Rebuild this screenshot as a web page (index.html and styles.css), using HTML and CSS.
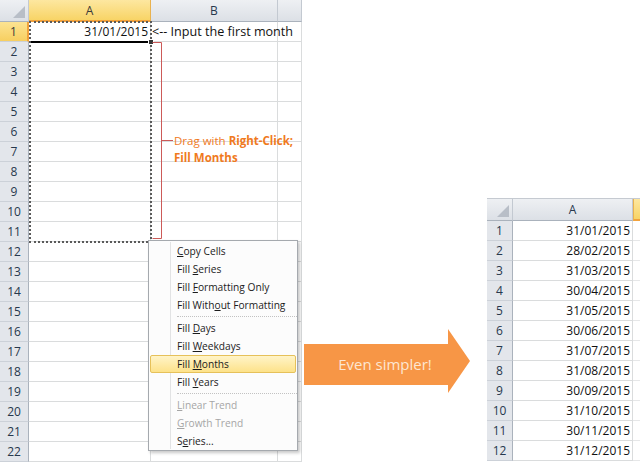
FILE: index.html
```html
<!DOCTYPE html>
<html>
<head>
<meta charset="utf-8">
<link rel="stylesheet" href="styles.css">
</head>
<body>
<div class="canvas">
  <div class="sheet">
    <div class="grid">
      <div class="hd corner"></div><div class="hd sel">A</div><div class="hd">B</div><div class="hd"></div>
      <div class="rh sel">1</div><div class="c num">31/01/2015</div><div class="c over">&lt;-- Input the first month</div><div class="c"></div>
      <div class="rh">2</div><div class="c"></div><div class="c"></div><div class="c"></div>
      <div class="rh">3</div><div class="c"></div><div class="c"></div><div class="c"></div>
      <div class="rh">4</div><div class="c"></div><div class="c"></div><div class="c"></div>
      <div class="rh">5</div><div class="c"></div><div class="c"></div><div class="c"></div>
      <div class="rh">6</div><div class="c"></div><div class="c"></div><div class="c"></div>
      <div class="rh">7</div><div class="c"></div><div class="c"></div><div class="c"></div>
      <div class="rh">8</div><div class="c"></div><div class="c"></div><div class="c"></div>
      <div class="rh">9</div><div class="c"></div><div class="c"></div><div class="c"></div>
      <div class="rh">10</div><div class="c"></div><div class="c"></div><div class="c"></div>
      <div class="rh">11</div><div class="c"></div><div class="c"></div><div class="c"></div>
      <div class="rh">12</div><div class="c"></div><div class="c"></div><div class="c"></div>
      <div class="rh">13</div><div class="c"></div><div class="c"></div><div class="c"></div>
      <div class="rh">14</div><div class="c"></div><div class="c"></div><div class="c"></div>
      <div class="rh">15</div><div class="c"></div><div class="c"></div><div class="c"></div>
      <div class="rh">16</div><div class="c"></div><div class="c"></div><div class="c"></div>
      <div class="rh">17</div><div class="c"></div><div class="c"></div><div class="c"></div>
      <div class="rh">18</div><div class="c"></div><div class="c"></div><div class="c"></div>
      <div class="rh">19</div><div class="c"></div><div class="c"></div><div class="c"></div>
      <div class="rh">20</div><div class="c"></div><div class="c"></div><div class="c"></div>
      <div class="rh">21</div><div class="c"></div><div class="c"></div><div class="c"></div>
      <div class="rh">22</div><div class="c"></div><div class="c"></div><div class="c"></div>
    </div>
    <div class="ants"></div>
    <div class="active-bottom"></div>
    <div class="handle"></div>
    <svg class="bracket" width="302" height="462" viewBox="0 0 302 462">
      <polyline points="152.5,42.5 161.5,42.5 161.5,238.5 152.5,238.5" fill="none" stroke="#cc5a58" stroke-width="1"/>
      <line x1="161.5" y1="140.5" x2="173" y2="140.5" stroke="#cc5a58" stroke-width="1"/>
    </svg>
    <div class="note">Drag with <b>Right-Click;</b><br><b>Fill Months</b></div>
    <div class="menu">
      <div class="mi"><u>C</u>opy Cells</div>
      <div class="mi">Fill <u>S</u>eries</div>
      <div class="mi">Fill <u>F</u>ormatting Only</div>
      <div class="mi">Fill With<u>o</u>ut Formatting</div>
      <div class="sep"></div>
      <div class="mi">Fill <u>D</u>ays</div>
      <div class="mi">Fill <u>W</u>eekdays</div>
      <div class="mi hot">Fill <u>M</u>onths</div>
      <div class="mi">Fill <u>Y</u>ears</div>
      <div class="sep"></div>
      <div class="mi dis"><u>L</u>inear Trend</div>
      <div class="mi dis"><u>G</u>rowth Trend</div>
      <div class="mi">S<u>e</u>ries...</div>
    </div>
  </div>

  <div class="arrow">Even simpler!</div>

  <div class="table2">
    <div class="hd corner"></div><div class="hd">A</div><div class="hd sel2"></div>
    <div class="rh">1</div><div class="c num">31/01/2015</div><div class="c edge"></div>
    <div class="rh">2</div><div class="c num">28/02/2015</div><div class="c edge"></div>
    <div class="rh">3</div><div class="c num">31/03/2015</div><div class="c edge"></div>
    <div class="rh">4</div><div class="c num">30/04/2015</div><div class="c edge"></div>
    <div class="rh">5</div><div class="c num">31/05/2015</div><div class="c edge"></div>
    <div class="rh">6</div><div class="c num">30/06/2015</div><div class="c edge"></div>
    <div class="rh">7</div><div class="c num">31/07/2015</div><div class="c edge"></div>
    <div class="rh">8</div><div class="c num">31/08/2015</div><div class="c edge"></div>
    <div class="rh">9</div><div class="c num">30/09/2015</div><div class="c edge"></div>
    <div class="rh">10</div><div class="c num">31/10/2015</div><div class="c edge"></div>
    <div class="rh">11</div><div class="c num">30/11/2015</div><div class="c edge"></div>
    <div class="rh">12</div><div class="c num">31/12/2015</div><div class="c edge"></div>
  </div>
</div>
</body>
</html>
```
FILE: styles.css
```css
html, body {
  margin: 0;
  padding: 0;
  background: #fff;
}
body {
  width: 640px;
  height: 462px;
  overflow: hidden;
  font-family: "Open Sans", "Liberation Sans", sans-serif;
}
.canvas {
  display: flex;
  align-items: flex-start;
  width: 640px;
  height: 462px;
}

/* left sheet */
.sheet {
  position: relative;
  flex: none;
  width: 302px;
  height: 462px;
  overflow: hidden;
}
.grid {
  display: grid;
  grid-template-columns: 29px 122px 127px 24px;
  grid-template-rows: 22px;
  grid-auto-rows: 20px;
}
.hd {
  box-sizing: border-box;
  background: linear-gradient(#eef0f3, #dce0e6);
  border-right: 1px solid #c3c9d1;
  border-bottom: 1px solid #aab2bc;
  font-size: 12px;
  line-height: 21px;
  color: #27384d;
  text-align: center;
}
.hd.sel {
  background: linear-gradient(#fde7a0, #f8d466);
  border-bottom: 2px solid #f2a23c;
  border-right-color: #e9b24f;
  color: #3a3a3a;
}
.hd.sel2 {
  background: linear-gradient(#fde7a0, #f8d466);
  border-right: none;
  border-bottom: 2px solid #f2a23c;
  border-left: 1px solid #e9b24f;
}
.corner {
  position: relative;
}
.corner::after {
  content: "";
  position: absolute;
  right: 3px;
  bottom: 3px;
  width: 12px;
  height: 12px;
  background: #b8bec7;
  clip-path: polygon(100% 0, 100% 100%, 0 100%);
}
.rh {
  box-sizing: border-box;
  background: #e3e6eb;
  border-right: 1px solid #aab2bc;
  border-bottom: 1px solid #ccd1d8;
  font-size: 12px;
  line-height: 19px;
  color: #27384d;
  text-align: center;
}
.rh.sel {
  background: linear-gradient(#fce392, #f7cf60);
  border-right: 2px solid #f2a23c;
  color: #3a3a3a;
}
.c {
  box-sizing: border-box;
  border-right: 1px solid #dadcdd;
  border-bottom: 1px solid #dadcdd;
  font-size: 12px;
  line-height: 19px;
  color: #111;
  white-space: nowrap;
}
.num {
  text-align: right;
  padding-right: 2px;
}
.over {
  padding-left: 1px;
  font-size: 12.6px;
  overflow: visible;
}
.ants {
  position: absolute;
  left: 29px;
  top: 21px;
  width: 123px;
  height: 222px;
  box-sizing: border-box;
  border: 2px dotted #5a5a5a;
}
.active-bottom {
  position: absolute;
  left: 31px;
  top: 41px;
  width: 119px;
  height: 2px;
  background: #000;
}
.handle {
  position: absolute;
  left: 148px;
  top: 39px;
  width: 4px;
  height: 4px;
  background: #333;
  border: 1px solid #fff;
}
.bracket {
  position: absolute;
  left: 0;
  top: 0;
}
.note {
  position: absolute;
  left: 174px;
  top: 132px;
  font-size: 11.5px;
  line-height: 17px;
  color: #f07a1e;
  white-space: nowrap;
}
.note b {
  font-weight: 700;
}

/* context menu */
.menu {
  position: absolute;
  left: 148px;
  top: 240px;
  width: 150px;
  height: 211px;
  box-sizing: border-box;
  padding-top: 1px;
  border: 1px solid #a5a9ae;
  background: #fcfcfc;
  box-shadow: 2px 2px 3px rgba(0, 0, 0, 0.22);
  font-size: 10.2px;
  color: #1b1b1b;
}
.menu::before {
  content: "";
  position: absolute;
  left: 21px;
  top: 1px;
  bottom: 1px;
  width: 1px;
  background: #e2e3e4;
}
.mi {
  position: relative;
  height: 18px;
  line-height: 18px;
  padding-left: 28px;
  white-space: nowrap;
}
.mi.hot {
  margin: 0 1px;
  padding-left: 26px;
  height: 16px;
  line-height: 16px;
  border: 1px solid #e6c15a;
  border-radius: 2px;
  background: linear-gradient(#fff4c8, #fde28a);
}
.mi.dis {
  color: #a6a6a6;
}
.sep {
  position: relative;
  height: 5px;
  margin-left: 28px;
}
.sep::after {
  content: "";
  position: absolute;
  left: 0;
  right: 0;
  top: 2px;
  border-top: 1px dotted #c2c2c2;
}

/* arrow */
.arrow {
  flex: none;
  box-sizing: border-box;
  margin: 329px 0 0 2px;
  width: 166px;
  height: 64px;
  padding: 6px 4px 0 0;
  background: #f79646;
  clip-path: polygon(0 15px, 144px 15px, 144px 0, 166px 32px, 144px 64px, 144px 56px, 0 56px);
  display: flex;
  align-items: center;
  justify-content: center;
  color: #fde6d2;
  font-size: 15px;
}

/* right table */
.table2 {
  flex: none;
  margin: 198px 0 0 17px;
  width: 153px;
  display: grid;
  grid-template-columns: 26px 120px 7px;
  grid-template-rows: 22px;
  grid-auto-rows: 20px;
  border-top: 1px solid #c5cad1;
}
.table2 .c.edge {
  border-right: none;
  border-bottom-color: #e6e7e8;
}
```
